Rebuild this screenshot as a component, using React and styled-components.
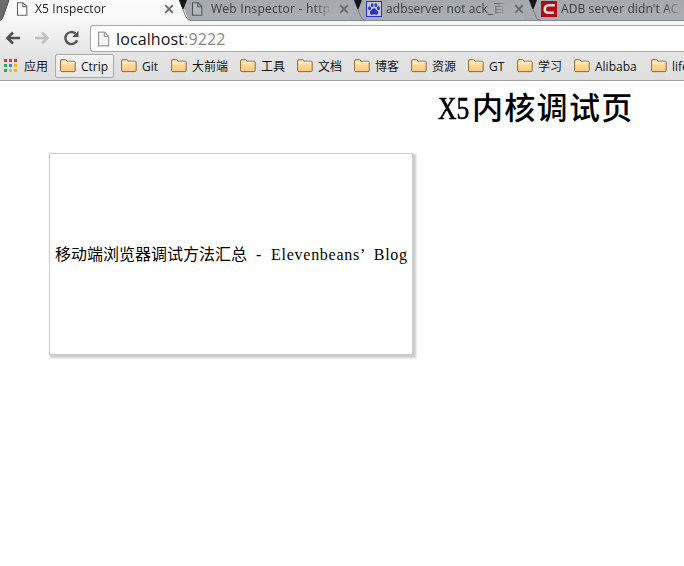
import React from 'react';
import styled, { createGlobalStyle, css } from 'styled-components';

const Global = createGlobalStyle`
  * { box-sizing: border-box; }
  body { margin: 0; background: #fff; overflow: hidden; }
`;

const Window = styled.div`
  width: 684px;
  height: 566px;
  overflow: hidden;
  background: #fff;
  font-family: 'Open Sans', 'Noto Sans CJK SC', sans-serif;
  font-size: 12px;
  color: #222;
`;

const Chrome = styled.header`
  height: 81px;
  background: linear-gradient(#fbfbfb 0, #f8f8f8 20px, #e4e4e4 54px, #dedede 80px);
  border-bottom: 1px solid #a0a0a0;
`;

const TabStrip = styled.div`
  height: 21px;
  width: 900px;
  display: flex;
`;

const Tab = styled.div`
  flex: none;
  width: 157px;
  height: 21px;
  display: flex;
  align-items: center;
  padding: 0 0 3px;
  color: ${p => (p.$active ? '#222' : '#383b3f')};
  ${p => !p.$active && css`
    background: linear-gradient(#a4a9af, #abafb5);
    border-bottom: 1px solid #858a90;
    padding-bottom: 2px;
  `}
`;

const Favicon = styled.span`
  width: 19px;
  height: 18px;
  flex: none;
  display: flex;
  align-items: center;
  svg { display: block; flex: none; margin-left: -1px; }
`;

const Title = styled.span`
  width: 121px;
  margin-right: 7px;
  margin-left: ${p => (p.$active ? -1 : 0)}px;
  padding-right: ${p => (p.$active ? 1 : 0)}px;
  flex: none;
  ${p => p.$active && 'width: 122px;'}
  line-height: 18px;
  font-size: 12px;
  letter-spacing: ${p => p.$tracking || 0}px;
  white-space: nowrap;
  overflow: hidden;
  mask-image: linear-gradient(to right, #000 103px, transparent 121px);
`;

const EdgeSvg = styled.svg`
  display: block;
  flex: none;
`;

const Toolbar = styled.div`
  height: 31px;
  display: flex;
  align-items: flex-start;
  padding: 4px 0 0 5px;
`;

const NavButton = styled.span`
  width: 29px;
  height: 27px;
  flex: none;
  svg { display: block; margin-top: 5px; }
`;

const AddressBar = styled.div`
  flex: 1;
  height: 27px;
  margin-left: -2px;
  display: flex;
  align-items: center;
  padding-left: 6px;
  background: #fff;
  border: 1px solid #aaa;
  border-right: 0;
  border-radius: 3px 0 0 3px;
`;

const Url = styled.span`
  margin-left: 6px;
  font-family: 'Open Sans', sans-serif;
  font-size: 16px;
  letter-spacing: 0.12px;
  line-height: 24px;
  color: #111;
`;

const Port = styled.span`
  color: #888;
`;

const Bookmarks = styled.nav`
  height: 28px;
  width: 900px;
  display: flex;
  align-items: center;
  padding-left: 4px;
`;

const Bookmark = styled.span`
  flex: none;
  width: ${p => p.$width}px;
  height: 24px;
  display: flex;
  align-items: center;
  gap: ${p => p.$gap || 5}px;
  padding-top: 1px;
  line-height: 18px;
  color: #111;
  white-space: nowrap;
  svg { flex: none; margin-top: -2px; }
`;

const Pressed = styled(Bookmark)`
  margin-right: 7px;
  padding-left: 4px;
  border: 1px solid #aaa;
  border-radius: 2px;
  background: linear-gradient(#f3f3f3, #e6e6e6);
`;

const Page = styled.main`
  font-family: 'Liberation Serif', 'Noto Sans CJK SC', serif;
  color: #000;
`;

const Heading = styled.h1`
  margin: 7px 0 0;
  padding-left: 438px;
  height: 40px;
  font-size: 31px;
  line-height: 40px;
  font-weight: 500;
  letter-spacing: 1.3px;
  white-space: nowrap;
`;

const HeadLatin = styled.span`
  display: inline-block;
  width: 34px;
  font-size: 32px;
  font-weight: 400;
  letter-spacing: 0;
  transform: scaleX(0.8);
  transform-origin: left;
  -webkit-text-stroke: 0.6px #000;
`;

const Card = styled.a`
  width: 364px;
  height: 202px;
  margin: 25px 0 0 49px;
  padding: 2px 0 0 5px;
  display: flex;
  align-items: center;
  border: 1px solid #ccc;
  box-shadow: 2px 2px 2px 1px #ccc;
  font-size: 16px;
  line-height: 20px;
  white-space: pre;
`;

const Latin = styled.span`
  letter-spacing: 0.72px;
  word-spacing: 4.3px;
`;

const DocIcon = ({ w = 12, h = 14, stroke = '#666', fill = '#fff' }) => (
  <svg width={w} height={h} viewBox="0 0 12 14">
    <path d="M1.5.7H7l3.8 3.8v8.8H1.5z" fill={fill} stroke={stroke} strokeWidth="1.1" />
    <path d="M6.8.7v4h4" fill="none" stroke={stroke} strokeWidth="1.1" />
  </svg>
);

const PawIcon = () => (
  <svg width="16" height="16" viewBox="0 0 16 16">
    <rect x=".5" y=".5" width="15" height="15" fill="#c3c7d6" stroke="#2a32c8" />
    <g fill="#2a32c8">
      <ellipse cx="3.6" cy="7.2" rx="1.4" ry="1.9" />
      <ellipse cx="6.2" cy="4.1" rx="1.4" ry="1.9" />
      <ellipse cx="9.9" cy="4.1" rx="1.4" ry="1.9" />
      <ellipse cx="12.5" cy="7.2" rx="1.4" ry="1.9" />
      <path d="M8 7.2c1.7 0 2 1.5 3.2 2.5 1.6 1.3 1.2 4-1 4-1 0-1.4-.4-2.2-.4s-1.2.4-2.2.4c-2.2 0-2.6-2.7-1-4C6 8.7 6.3 7.2 8 7.2z" />
    </g>
  </svg>
);

const CIcon = () => (
  <svg width="16" height="16" viewBox="0 0 16 16">
    <rect width="16" height="16" fill="#b40a10" />
    <path d="M13.8 4.2H7.8C5 4.200 3.800 6 3.800 8.200s1 3.600 3.400 3.600h5.600" fill="none" stroke="#e4dcdc" strokeWidth="2.600" />
  </svg>
);

const CloseIcon = () => (
  <svg width="10" height="10" viewBox="0 0 10 10">
    <path d="M1.2 1.2l7.6 7.6M8.8 1.2L1.2 8.8" stroke="#666a6e" strokeWidth="1.8" />
  </svg>
);

const FolderIcon = () => (
  <svg width="16" height="14" viewBox="0 0 16 14">
    <defs>
      <linearGradient id="folder" x1="0" y1="0" x2="0" y2="1">
        <stop offset="0" stopColor="#ffe9b8" />
        <stop offset="1" stopColor="#fbc977" />
      </linearGradient>
    </defs>
    <path d="M.6 11.5V2Q.6.7 1.9.7H5.5Q6.600.7 6.900 2.200H14Q15.200 2.200 15.200 3.400V11.500Q15.200 12.600 14 12.600H1.800Q.6 12.600.6 11.500z" fill="url(#folder)" stroke="#8d693e" />
    <path d="M1.5 4.2H7L8 3.3H14.3" fill="none" stroke="#fff3d5" />
  </svg>
);

const AppsIcon = () => {
  const colors = ['#e8352e', '#e8352e', '#e8352e', '#2da94f', '#2684fc', '#fbb50a', '#2da94f', '#fbb50a', '#fbb50a'];
  return (
    <svg width="13" height="13" viewBox="0 0 13 13">
      {colors.map((c, i) => (
        <rect key={i} x={(i % 3) * 5} y={Math.floor(i / 3) * 5} width="3" height="3" fill={c} />
      ))}
    </svg>
  );
};

const ArrowIcon = ({ color, flip }) => (
  <svg width="16" height="16" viewBox="0 0 16 16">
    <path transform={flip ? 'translate(16 0) scale(-1 1)' : undefined} d="M8 2.5L2.5 8 8 13.5M3 8H15" fill="none" stroke={color} strokeWidth="2.5" />
  </svg>
);

const ReloadIcon = () => (
  <svg width="16" height="16" viewBox="0 0 16 16">
    <path d="M14 10.2A6 6 0 1 1 12.500 3.700" fill="none" stroke="#555" strokeWidth="2.400" />
    <path d="M15.500 .7V7H9.200z" fill="#555" />
  </svg>
);

const LeadingEdge = () => (
  <EdgeSvg width="17" height="21" viewBox="0 0 17 21">
    <path d="M0 0H9L3 17Q2 20 0 20z" fill="#6c6c6c" />
    <path d="M9 0L3 17Q2 20 0 20.500" fill="none" stroke="#4a4a4a" />
  </EdgeSvg>
);

const TabEdge = ({ active }) => (
  <EdgeSvg width="18" height="21" viewBox="0 0 18 21">
    <rect width="18" height="20" fill="#a7abb1" />
    <path d="M0 20.5H18" stroke="#858a90" />
    {active && <path d="M0 0H7L13 17Q14 20 18 21H0z" fill="#f9f9f9" />}
    <path d="M5.500 0L11.500 16Q13 20 17 20.500" fill="none" stroke="#777b80" />
    <path d="M5 0H13L9.500 9H8.500z" fill="#151515" />
  </EdgeSvg>
);

const tabs = [
  { title: 'X5 Inspector', icon: <DocIcon />, active: true, tracking: 0.12 },
  { title: 'Web Inspector - http:', icon: <DocIcon stroke="#555" fill="#b3b7bc" />, tracking: 0.25 },
  { title: 'adbserver not ack_百', icon: <PawIcon />, tracking: 0.1 },
  { title: "ADB server didn't AC", icon: <CIcon />, tracking: 0.1 },
];

const folders = [
  ['Git', 50], ['大前端', 69], ['工具', 57], ['文档', 57], ['博客', 57], ['资源', 57],
  ['GT', 49], ['学习', 57], ['Alibaba', 77], ['life', 60],
];

export default function App() {
  return (
    <Window>
      <Global />
      <Chrome>
        <TabStrip>
          <LeadingEdge />
          {tabs.map(t => (
            <React.Fragment key={t.title}>
              <Tab $active={t.active}>
                <Favicon>{t.icon}</Favicon>
                <Title $active={t.active} $tracking={t.tracking}>{t.title}</Title>
                <CloseIcon />
              </Tab>
              <TabEdge active={t.active} />
            </React.Fragment>
          ))}
        </TabStrip>
        <Toolbar>
          <NavButton><ArrowIcon color="#505050" /></NavButton>
          <NavButton><ArrowIcon color="#c0c0c0" flip /></NavButton>
          <NavButton><ReloadIcon /></NavButton>
          <AddressBar>
            <DocIcon w={13} h={16} stroke="#999" fill="#f6f6f6" />
            <Url>localhost<Port>:9222</Port></Url>
          </AddressBar>
        </Toolbar>
        <Bookmarks>
          <Bookmark $width={51} $gap={7}><AppsIcon />应用</Bookmark>
          <Pressed $width={59}><FolderIcon />Ctrip</Pressed>
          {folders.map(([name, width]) => (
            <Bookmark key={name} $width={width}><FolderIcon />{name}</Bookmark>
          ))}
        </Bookmarks>
      </Chrome>
      <Page>
        <Heading><HeadLatin>X5</HeadLatin>内核调试页</Heading>
        <Card>移动端浏览器调试方法汇总<Latin> - Elevenbeans’ Blog</Latin></Card>
      </Page>
    </Window>
  );
}
